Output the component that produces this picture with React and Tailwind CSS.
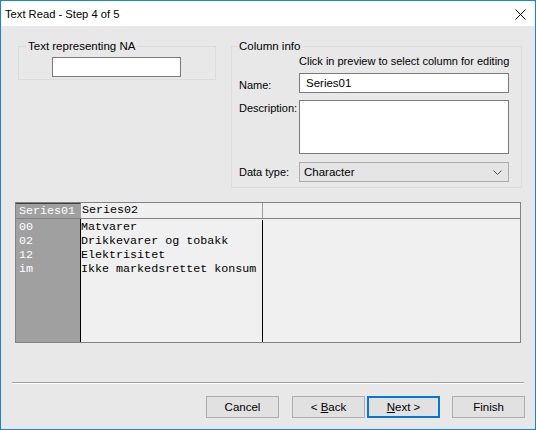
import React from 'react'

const ROWS = [
  ['00', 'Matvarer'],
  ['02', 'Drikkevarer og tobakk'],
  ['12', 'Elektrisitet'],
  ['im', 'Ikke markedsrettet konsum'],
]

const ui = { fontFamily: '"Liberation Sans", Arial, sans-serif' }
const mono = { fontFamily: '"Liberation Mono", "Courier New", monospace' }

function Button({ children, primary }) {
  return (
    <button
      className={
        primary
          ? 'h-[22px] w-[73px] border-2 border-[#0078d7] bg-[#e1e1e1] text-[11.5px] leading-[18px] text-black'
          : 'h-[22px] w-[73px] border border-[#adadad] bg-[#e1e1e1] text-[11.5px] leading-[20px] text-black'
      }
      style={ui}
    >
      {children}
    </button>
  )
}

export default function App() {
  return (
    <div
      className="flex h-[430px] w-[536px] flex-col border border-[#1883d7] bg-[#e8e8e8] text-[11px] leading-[14px] text-black"
      style={ui}
    >
      {/* title bar */}
      <div className="flex h-[25px] shrink-0 items-center justify-between bg-white pl-[4px] pr-[9px]">
        <span className="text-[11.2px] leading-[14px]">Text Read - Step 4 of 5</span>
        <svg width="11" height="11" viewBox="0 0 11 11" className="mt-[1px]">
          <path d="M0.5 0.5 L10.5 10.5 M10.5 0.5 L0.5 10.5" stroke="#000" strokeWidth="1" />
        </svg>
      </div>

      <div className="flex flex-1 flex-col pt-[13px]">
        {/* top group boxes */}
        <div className="flex items-start pl-[17px]">
          <fieldset className="w-[198px] border border-[#dcdcdc] px-[7px] pb-[2px] pt-[4px]">
            <legend className="whitespace-nowrap px-[2px] text-[11.5px] leading-[14px]">Text representing NA</legend>
            <div className="flex justify-center pr-[2px]">
              <div className="h-[20px] w-[129px] border border-[#7a7a7a] bg-white" />
            </div>
          </fieldset>

          <fieldset className="ml-[15px] w-[291px] border border-[#dcdcdc] pb-[5px] pl-[7px] pr-[11px] pt-[1px]">
            <legend className="ml-[-2px] whitespace-nowrap px-[2px] text-[11.5px] leading-[14px]">Column info</legend>
            <div className="mb-[5px] whitespace-nowrap pl-[60px]">Click in preview to select column for editing</div>
            <div className="grid grid-cols-[60px_210px] gap-y-[7px] whitespace-nowrap">
              <div className="pt-[5px]">Name:</div>
              <div className="flex h-[20px] items-center border border-[#7a7a7a] bg-white pl-[6px] text-[11.5px]">Series01</div>
              <div className="pt-[1px]">Description:</div>
              <div className="h-[54px] border border-[#7a7a7a] bg-white" />
              <div className="flex items-center pt-[1px]">Data type:</div>
              <div className="mt-[1px] flex h-[20px] items-center justify-between border border-[#acacac] bg-[#e5e5e5] pl-[4px] pr-[6px] text-[11.5px]">
                <span>Character</span>
                <svg width="9" height="5" viewBox="0 0 9 5">
                  <path d="M0.5 0.5 L4.5 4.5 L8.5 0.5" fill="none" stroke="#555" strokeWidth="1" />
                </svg>
              </div>
            </div>
          </fieldset>
        </div>

        {/* preview table */}
        <div className="ml-[14px] mt-[14px] flex h-[141px] w-[506px] flex-col border border-[#828282] bg-[#f0f0f0]" style={mono}>
          <div className="flex h-[16px] shrink-0 border-b border-[#828282] text-[11.7px] leading-[15px]">
            <div className="w-[65px] border-r border-t border-[#a0a0a0] border-t-[#404040] bg-[#a0a0a0] pl-[3px] text-white">Series01</div>
            <div className="w-[182px] border-r border-[#a0a0a0] pl-[1px]">Series02</div>
            <div className="flex-1" />
          </div>
          <div className="flex flex-1 pt-[1px] text-[11.7px] leading-[14px]">
            <div className="-mt-[1px] w-[65px] border-r border-black bg-[#a0a0a0] pl-[3px] pt-[1px] text-white">
              {ROWS.map(([a]) => (
                <div key={a}>{a}</div>
              ))}
            </div>
            <div className="w-[182px] border-r border-black">
              {ROWS.map(([a, b]) => (
                <div key={a} className="whitespace-pre">{b}</div>
              ))}
            </div>
            <div className="flex-1" />
          </div>
        </div>

        {/* separator */}
        <div className="ml-[11px] mt-[39px] w-[512px] border-b border-t border-b-white border-t-[#a0a0a0]" />

        {/* buttons */}
        <div className="mt-[12px] flex justify-end pr-[10px]">
          <Button>Cancel</Button>
          <div className="ml-[13px]">
            <Button>
              &lt; <u>B</u>ack
            </Button>
          </div>
          <div className="ml-[2px]">
            <Button primary>
              <u>N</u>ext &gt;
            </Button>
          </div>
          <div className="ml-[12px]">
            <Button>Finish</Button>
          </div>
        </div>
      </div>
    </div>
  )
}
